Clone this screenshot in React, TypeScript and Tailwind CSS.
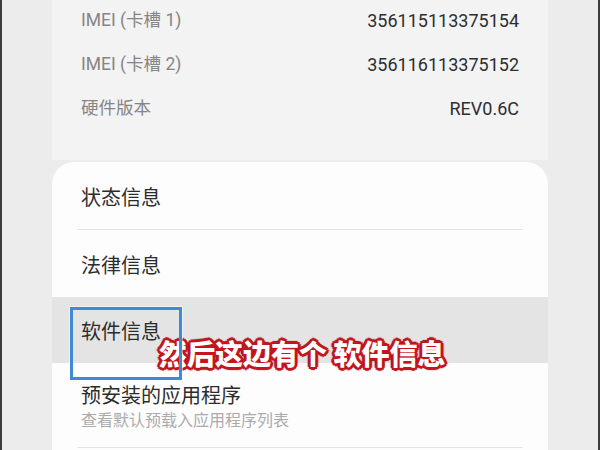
import React from "react";

const cjk = "font-['Roboto','Noto_Sans_CJK_SC',sans-serif]";

function InfoRow({ label, value }: { label: string; value: string }) {
  return (
    <div className="flex h-[44px] items-center justify-between pt-[2px]">
      <span className="text-[17.5px] text-[#858585]">{label}</span>
      <span className="text-[18px] text-[#2e2e2e]">{value}</span>
    </div>
  );
}

export default function App() {
  return (
    <div
      className={`relative h-[450px] w-[600px] overflow-hidden border-x-2 border-[#3c3c3c] bg-[#ececec] ${cjk}`}
    >
      <div className="flex h-full flex-col px-[50px]">
        {/* top card */}
        <div className="h-[160px] shrink-0 bg-[#f3f3f3] px-[29px]">
          <div className="-mt-[3px]">
            <InfoRow label="IMEI (卡槽 1)" value="356115113375154" />
            <InfoRow label="IMEI (卡槽 2)" value="356116113375152" />
            <InfoRow label="硬件版本" value="REV0.6C" />
          </div>
        </div>
        {/* lower card */}
        <div className="mt-[2px] flex-1 rounded-t-[22px] bg-[#fdfdfd]">
          <div className="flex h-[67px] items-center px-[29px] pt-[4px] text-[20px] text-[#2c2c2c]">
            状态信息
          </div>
          <div className="mx-[25px] h-px bg-[#e4e4e4]" />
          <div className="flex h-[67px] items-center px-[29px] pt-[4px] text-[20px] text-[#2c2c2c]">
            法律信息
          </div>
          <div className="flex h-[66px] items-center bg-[#e4e4e4] px-[29px] pt-[4px] text-[20px] text-[#2c2c2c]">
            软件信息
          </div>
          <div className="flex h-[84px] flex-col justify-center px-[29px] pt-[2px]">
            <span className="text-[20px] leading-[30px] text-[#2c2c2c]">预安装的应用程序</span>
            <span className="text-[16px] leading-[20px] text-[#ababab]">查看默认预载入应用程序列表</span>
          </div>
          <div className="mx-[25px] h-px bg-[#e4e4e4]" />
        </div>
      </div>

      {/* subtitle overlay */}
      <div
        className="absolute left-[157px] top-[334px] whitespace-pre text-[28px] font-black leading-[38px] text-white font-['Noto_Sans_CJK_SC',sans-serif] [text-shadow:2px_0_0_#c4141c,-2px_0_0_#c4141c,0_2px_0_#c4141c,0_-2px_0_#c4141c,2px_2px_0_#c4141c,-2px_-2px_0_#c4141c,2px_-2px_0_#c4141c,-2px_2px_0_#c4141c,3px_0_1px_#9e0f16,-3px_0_1px_#9e0f16,0_3px_1px_#9e0f16,0_-3px_1px_#9e0f16]"
      >
        然后这边有个 软件信息
      </div>

      {/* blue selection box */}
      <div className="absolute left-[68px] top-[307px] h-[73px] w-[112px] border-[3px] border-[#3f8ad6] shadow-[0_0_0_1px_rgba(255,255,255,0.5)]" />
    </div>
  );
}
